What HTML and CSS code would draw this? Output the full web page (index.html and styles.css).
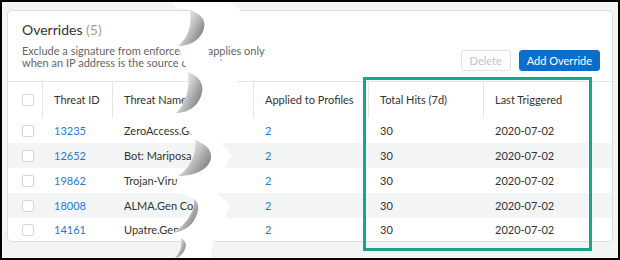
FILE: index.html
```html
<!DOCTYPE html>
<html lang="en">

<head>
  <meta charset="UTF-8">
  <title>Overrides</title>
  <link rel="stylesheet" href="styles.css">
</head>

<body>
  <div class="shot">
    <div class="card">
      <div class="card-head">
        <div class="intro">
          <h2 class="title">Overrides <span class="count">(5)</span></h2>
          <p class="description">Exclude a signature from enforcement applies only<br>when an IP address is the source or target.</p>
        </div>
        <div class="actions">
          <button class="btn" disabled>Delete</button>
          <button class="btn btn-primary">Add Override</button>
        </div>
      </div>

      <table class="grid">
        <colgroup>
          <col class="col-check">
          <col class="col-id">
          <col class="col-name">
          <col class="col-profiles">
          <col class="col-hits">
          <col>
        </colgroup>
        <thead>
          <tr>
            <th><span class="check"></span></th>
            <th>Threat ID</th>
            <th>Threat Name</th>
            <th>Applied to Profiles</th>
            <th>Total Hits (7d)</th>
            <th>Last Triggered</th>
          </tr>
        </thead>
        <tbody>
          <tr>
            <td><span class="check"></span></td>
            <td><a href="#">13235</a></td>
            <td>ZeroAccess.Gen</td>
            <td><a href="#">2</a></td>
            <td>30</td>
            <td>2020-07-02</td>
          </tr>
          <tr>
            <td><span class="check"></span></td>
            <td><a href="#">12652</a></td>
            <td>Bot: Mariposa C&amp;C</td>
            <td><a href="#">2</a></td>
            <td>30</td>
            <td>2020-07-02</td>
          </tr>
          <tr>
            <td><span class="check"></span></td>
            <td><a href="#">19862</a></td>
            <td>Trojan-Virut.Gen</td>
            <td><a href="#">2</a></td>
            <td>30</td>
            <td>2020-07-02</td>
          </tr>
          <tr>
            <td><span class="check"></span></td>
            <td><a href="#">18008</a></td>
            <td>ALMA.Gen Comm</td>
            <td><a href="#">2</a></td>
            <td>30</td>
            <td>2020-07-02</td>
          </tr>
          <tr>
            <td><span class="check"></span></td>
            <td><a href="#">14161</a></td>
            <td>Upatre.Gen C2</td>
            <td><a href="#">2</a></td>
            <td>30</td>
            <td>2020-07-02</td>
          </tr>
        </tbody>
      </table>
    </div>

    <!-- callout around the hit columns -->
    <div class="highlight"></div>

    <!-- torn paper strip -->
    <svg class="tear" viewBox="2 2 616 256">
      <defs>
        <linearGradient id="curl" x1="0" y1="0" x2="1" y2="0.7">
          <stop offset="0" stop-color="#fbfbfb"/>
          <stop offset="0.5" stop-color="#cdcdcd"/>
          <stop offset="1" stop-color="#7c7c7c"/>
        </linearGradient>
      </defs>
      <path fill="#fff" d="M173,0 L176,8 L190,10 C192,26 188,38 178,46 L188,72 C190,88 186,104 176,113 L195,140 C197,156 188,170 178,176 L175,190 L194,199 C196,212 184,226 173,233 L181,238 C183,248 178,255 173,260 L210,260 L214,240 L224,222 L230,205 L214,190 L220,175 L232,155 L218,140 L214,118 L232,100 L238,80 L228,64 L209,55 L208,46 L234,28 L240,10 L228,0 Z"/>
      <path fill="url(#curl)" d="M190,10 C201,14 206,20 204,28 C202,38 192,46 178,46 C188,38 192,26 190,10 Z"/>
      <path fill="url(#curl)" d="M188,72 C199,76 204,84 202,92 C200,104 190,113 176,113 C186,104 190,88 188,72 Z"/>
      <path fill="url(#curl)" d="M195,140 C206,144 212,150 211,158 C209,170 194,176 178,176 C188,170 197,156 195,140 Z"/>
      <path fill="url(#curl)" d="M194,199 C199,203 199,208 197,214 C194,224 186,231 173,233 C184,226 196,212 194,199 Z"/>
      <path fill="url(#curl)" d="M181,238 C186,241 187,245 185,249 C183,254 179,258 173,260 C178,255 183,248 181,238 Z"/>
    </svg>
  </div>
</body>

</html>
```

FILE: styles.css
```css
* {
  margin: 0;
  padding: 0;
  box-sizing: border-box;
}

body {
  font-family: Lato, "Open Sans", sans-serif;
  color: #333;
  background: #fff;
}

.shot {
  position: relative;
  width: 620px;
  height: 260px;
  padding: 8px 5px 0 5px;
  border: 2px solid #000;
  background: #f3f4f4;
  overflow: hidden;
}

.card {
  background: #fff;
  border: 1px solid #dcdfdf;
  border-radius: 4px;
  overflow: hidden;
}

.card-head {
  display: flex;
  justify-content: space-between;
  align-items: flex-end;
  padding: 10px 12px 10px 14px;
}

.title {
  font-size: 14px;
  font-weight: 400;
  line-height: 18px;
  color: #333;
}

.count {
  color: #a0a0a0;
}

.description {
  margin-top: 6px;
  margin-bottom: 2px;
  font-size: 11px;
  line-height: 12px;
  color: #666;
}

.actions {
  display: flex;
  gap: 8px;
}

.btn {
  height: 21px;
  padding: 0 8px;
  font-family: inherit;
  font-size: 11px;
  color: #c4c4c4;
  background: #fff;
  border: 1px solid #e0e0e0;
  border-radius: 3px;
}

.btn-primary {
  padding: 0 7px;
  color: #fff;
  background: #0b6ecf;
  border-color: #0b6ecf;
}

.grid {
  width: 100%;
  table-layout: fixed;
  border-collapse: separate;
  border-spacing: 0;
  font-size: 11px;
  line-height: 14px;
}

.col-check {
  width: 34px;
}

.col-id {
  width: 70px;
}

.col-name {
  width: 141px;
}

.col-profiles,
.col-hits {
  width: 115px;
}

.grid th {
  height: 37px;
  padding-left: 11px;
  font-weight: 400;
  text-align: left;
  color: #333;
  border-top: 1px solid #e4e6e6;
  border-left: 1px solid #e4e6e6;
}

.grid td {
  height: 25px;
  padding-left: 12px;
  white-space: nowrap;
  overflow: hidden;
}

.grid th:first-child,
.grid td:first-child {
  padding-left: 14px;
  border-left: none;
}

.grid tbody tr:nth-child(even) td {
  background: #f3f5f5;
}

.grid tbody tr:last-child td {
  height: 23px;
}

.grid a {
  color: #1f7bd6;
  text-decoration: none;
}

.check {
  display: block;
  width: 12px;
  height: 12px;
  background: #fff;
  border: 1px solid #d5d7d7;
  border-radius: 2px;
}

.highlight {
  position: absolute;
  left: 361px;
  top: 75px;
  width: 229px;
  height: 174px;
  border: 3px solid #15a78a;
}

.tear {
  position: absolute;
  left: 0;
  top: 0;
  width: 616px;
  height: 256px;
  pointer-events: none;
}
```
